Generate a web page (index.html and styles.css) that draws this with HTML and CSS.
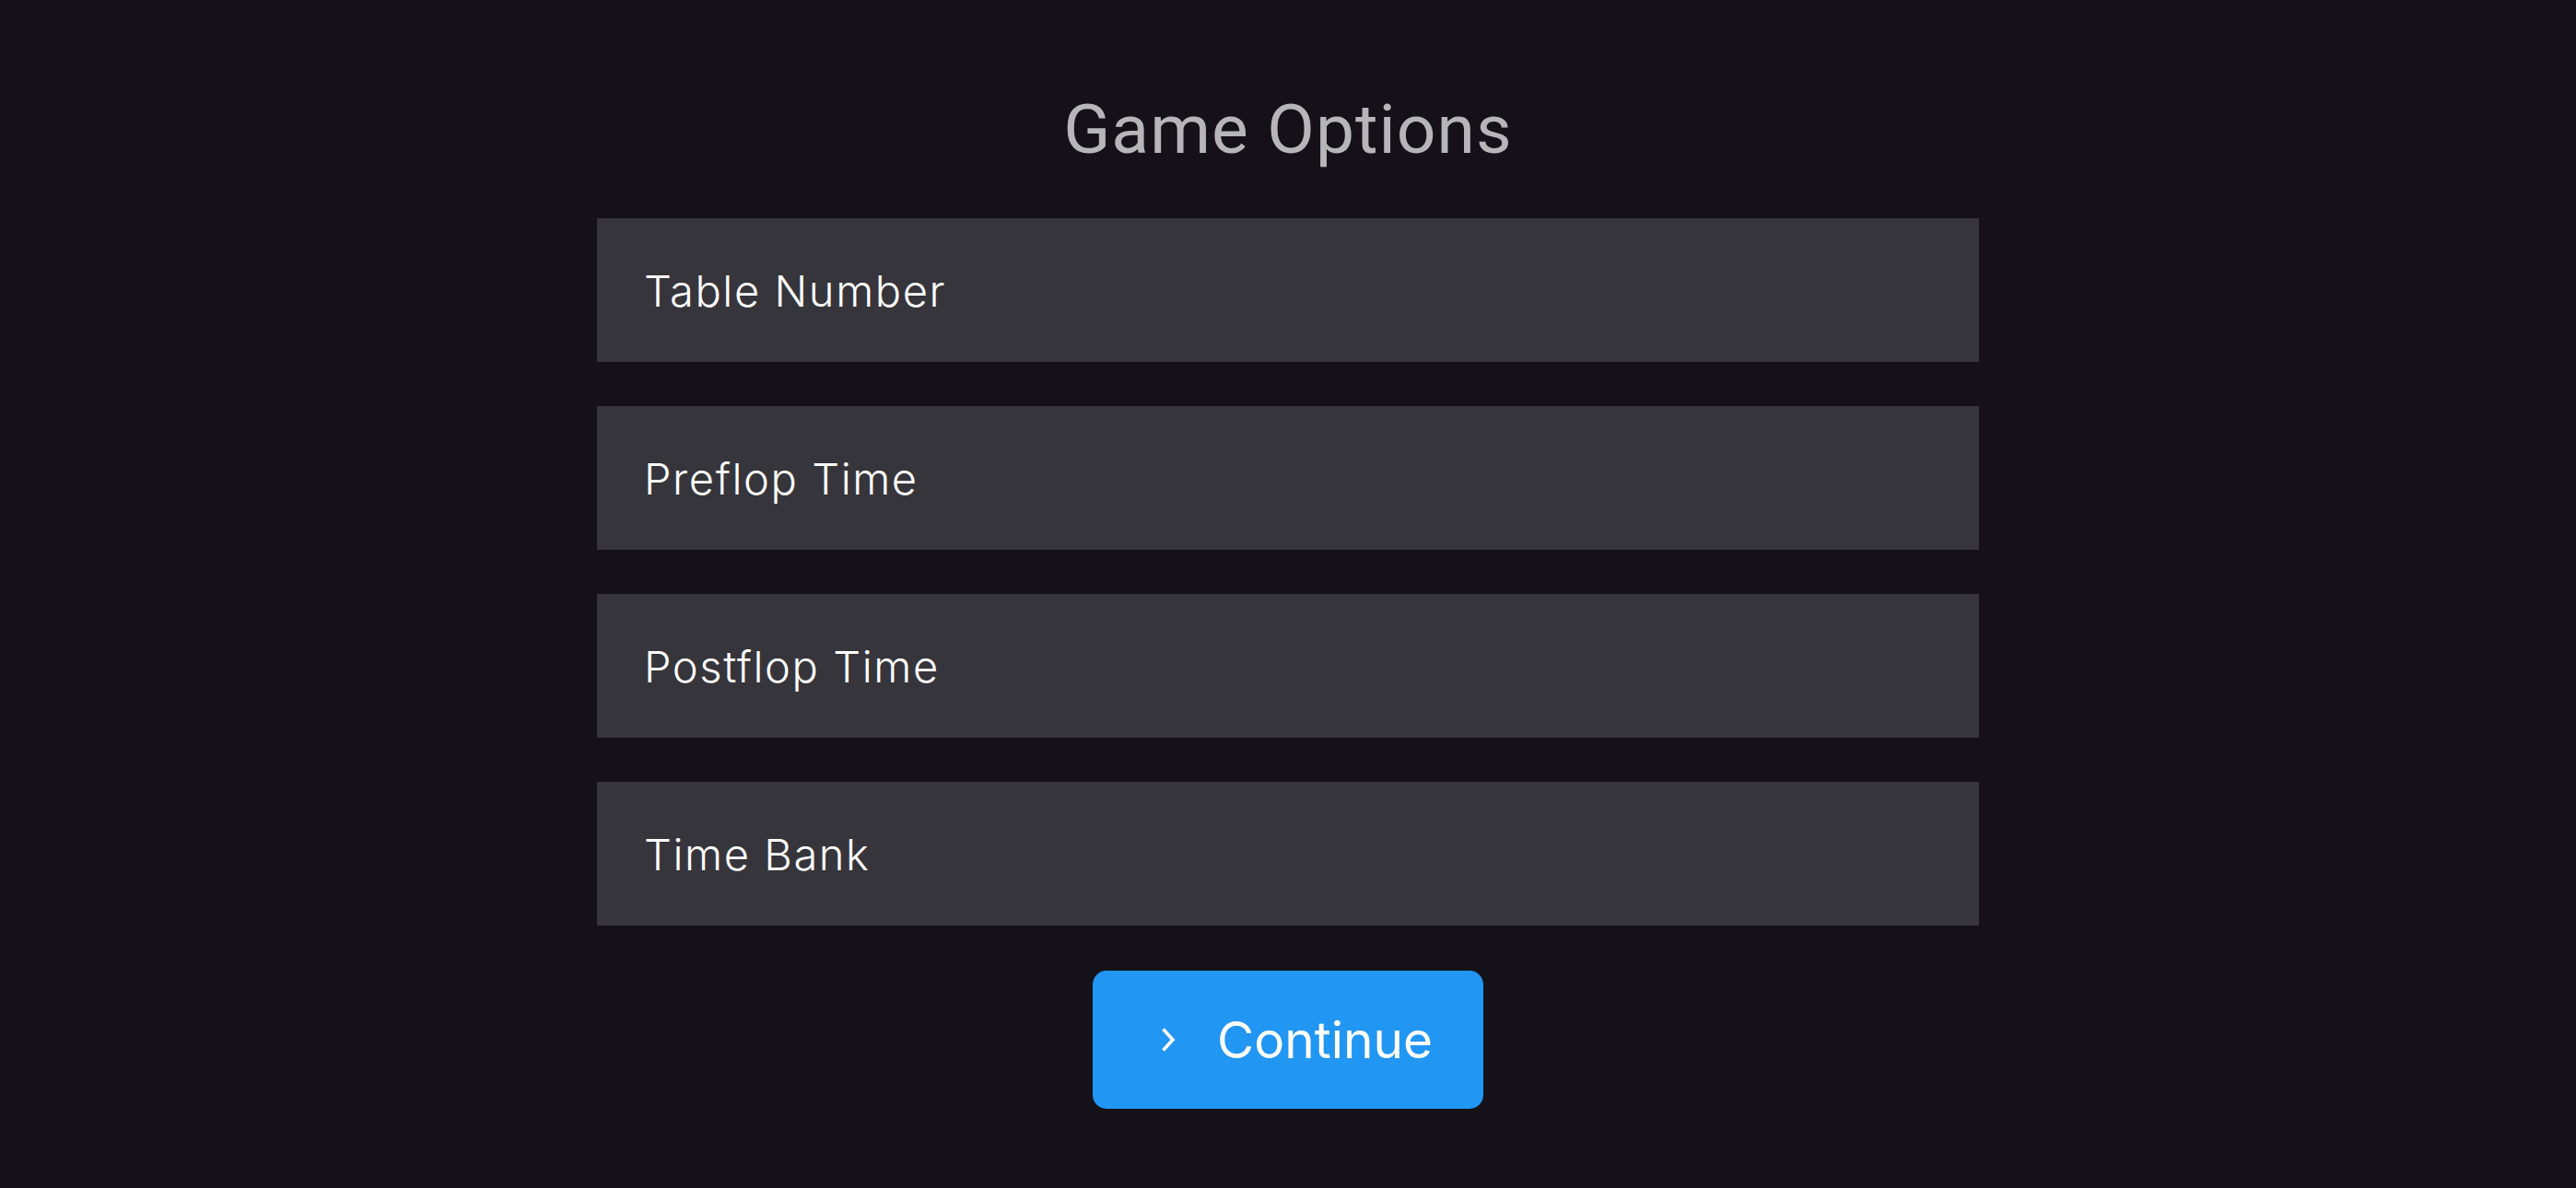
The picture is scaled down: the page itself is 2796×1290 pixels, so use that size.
FILE: index.html
```html
<!DOCTYPE html>
<html lang="en">
<head>
    <meta charset="UTF-8">
    <meta name="viewport" content="width=device-width, initial-scale=1.0">
    <title>Game Options</title>
    <link rel="stylesheet" href="styles.css">
</head>
<body>
    <div class="options">
        <h1 class="title">Game Options</h1>
        <div class="fields">
            <input class="field" type="text" placeholder="Table Number">
            <input class="field" type="text" placeholder="Preflop Time">
            <input class="field" type="text" placeholder="Postflop Time">
            <input class="field" type="text" placeholder="Time Bank">
        </div>
        <button class="continue">
            <svg class="chevron" width="16" height="28" viewBox="0 0 16 28">
                <path d="M2.5 2.5 L13 14 L2.5 25.5" fill="none" stroke="#fff" stroke-width="3.6"/>
            </svg>
            <span>Continue</span>
        </button>
    </div>
</body>
</html>
```

FILE: styles.css
```css
body {
    margin: 0;
    height: 100vh;
    background: #141218;
    font-family: Inter, "Noto Sans", sans-serif;
}
.options {
    width: 1500px;
    margin: 0 auto;
    padding-top: 90px;
    display: flex;
    flex-direction: column;
    align-items: center;
}
.title {
    margin: 0 0 47px 0;
    font-family: Roboto, sans-serif;
    font-weight: 400;
    font-size: 75px;
    line-height: 100px;
    color: #b6b5b9;
    letter-spacing: 1px;
}
.fields {
    width: 100%;
    display: flex;
    flex-direction: column;
    gap: 48px;
}
.field {
    box-sizing: border-box;
    width: 100%;
    height: 156px;
    padding: 0 51px;
    border: none;
    background: #36353b;
    font-family: Inter, sans-serif;
    font-size: 47px;
    font-weight: 300;
    letter-spacing: 1.6px;
    color: #fff;
    outline: none;
}
.field::placeholder {
    color: #fff;
}
.continue {
    box-sizing: border-box;
    margin-top: 49px;
    width: 424px;
    height: 150px;
    padding: 0 0 0 74px;
    border: none;
    border-radius: 15px;
    background: #2196f3;
    color: #fff;
    display: flex;
    align-items: center;
    gap: 45px;
    font-family: Inter, sans-serif;
    font-size: 55px;
    cursor: pointer;
}
.chevron {
    display: block;
}
```
